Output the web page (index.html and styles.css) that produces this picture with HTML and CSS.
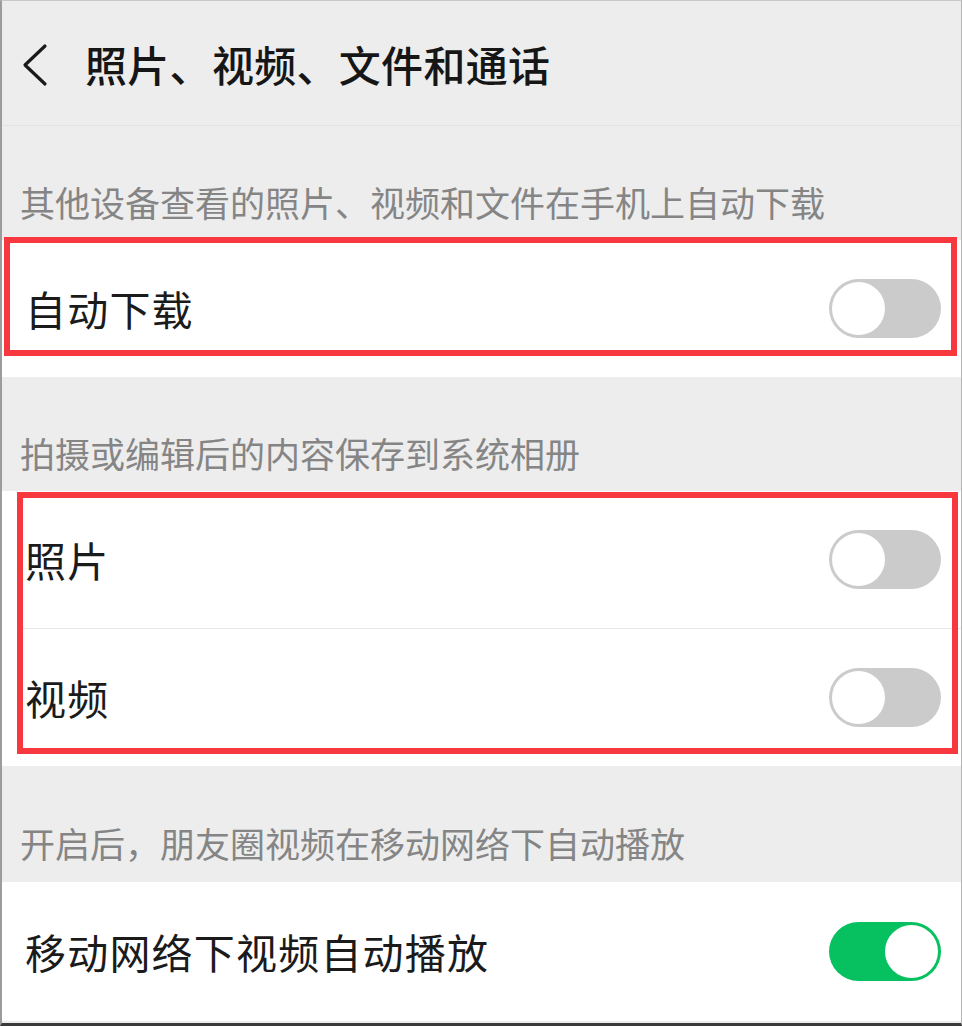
FILE: index.html
```html
<!DOCTYPE html>
<html lang="zh-CN">
<head>
<meta charset="utf-8">
<title>照片、视频、文件和通话</title>
<link rel="stylesheet" href="styles.css">
</head>
<body>
<div class="page">
  <header class="topbar">
    <svg class="back" width="30" height="44" viewBox="0 0 30 44">
      <path d="M25 3 L5 22 L25 41" fill="none" stroke="#1a1a1a" stroke-width="3.2" stroke-linecap="round" stroke-linejoin="round"/>
    </svg>
    <h1 class="title">照片、视频、文件和通话</h1>
  </header>

  <div class="section-title">其他设备查看的照片、视频和文件在手机上自动下载</div>
  <div class="group">
    <div class="row">
      <span class="label">自动下载</span>
      <span class="toggle"><span class="knob"></span></span>
    </div>
  </div>

  <div class="section-title">拍摄或编辑后的内容保存到系统相册</div>
  <div class="group">
    <div class="row">
      <span class="label">照片</span>
      <span class="toggle"><span class="knob"></span></span>
    </div>
    <div class="divider"></div>
    <div class="row row-b">
      <span class="label">视频</span>
      <span class="toggle"><span class="knob"></span></span>
    </div>
  </div>

  <div class="section-title section-title-last">开启后，朋友圈视频在移动网络下自动播放</div>
  <div class="group">
    <div class="row row-last">
      <span class="label">移动网络下视频自动播放</span>
      <span class="toggle on"><span class="knob"></span></span>
    </div>
  </div>

  <div class="mark mark-1"></div>
  <div class="mark mark-2"></div>
</div>
</body>
</html>
```

FILE: styles.css
```css
* { box-sizing: border-box; }

html, body {
  margin: 0;
  padding: 0;
  background: #ededed;
}

body {
  font-family: "Noto Sans CJK SC", "Noto Sans", sans-serif;
}

.page {
  position: relative;
  width: 962px;
  height: 1026px;
  overflow: hidden;
  background: #ededed;
  border-left: 2px solid #9c9c9c;
  border-right: 1px solid #b5b5b5;
  border-top: 1px solid #c8c8c8;
  border-bottom: 3px solid #3a3a3a;
}

.topbar {
  height: 125px;
  display: flex;
  align-items: center;
  padding-left: 18px;
  border-bottom: 1px solid #e3e3e3;
}

.back {
  display: block;
  margin-top: 4px;
}

.title {
  margin: 0 0 0 35px;
  font-size: 42px;
  font-weight: 500;
  color: #161616;
  line-height: 1;
  letter-spacing: 0.3px;
  margin-top: 2px;
}

.section-title {
  height: 114px;
  display: flex;
  align-items: flex-end;
  padding-left: 18px;
  padding-bottom: 17px;
  font-size: 35px;
  line-height: 42px;
  color: #858585;
}

.section-title-last {
  height: 116px;
  padding-bottom: 18px;
}

.group {
  background: #ffffff;
}

.row {
  height: 137px;
  display: flex;
  align-items: center;
  justify-content: space-between;
  padding: 0 20px 0 23px;
}

.row-b {
  height: 137px;
}

.row-last {
  height: 139px;
}

.divider {
  height: 1px;
  background: #e6e6e6;
  margin-left: 20px;
}

.label {
  font-size: 41px;
  line-height: 1;
  color: #1b1b1b;
  letter-spacing: 1.2px;
}

.toggle {
  width: 112px;
  height: 59px;
  border-radius: 30px;
  background: #cbcbcb;
  padding: 3px;
  display: flex;
  justify-content: flex-start;
}

.toggle .knob {
  width: 53px;
  height: 53px;
  border-radius: 50%;
  background: #ffffff;
}

.toggle.on {
  background: #07c160;
  justify-content: flex-end;
}

.mark {
  position: absolute;
  border: 6px solid #f7383f;
}

.mark-1 {
  left: 2px;
  top: 236px;
  width: 953px;
  height: 119px;
}

.mark-2 {
  left: 15px;
  top: 491px;
  width: 941px;
  height: 262px;
}
```
